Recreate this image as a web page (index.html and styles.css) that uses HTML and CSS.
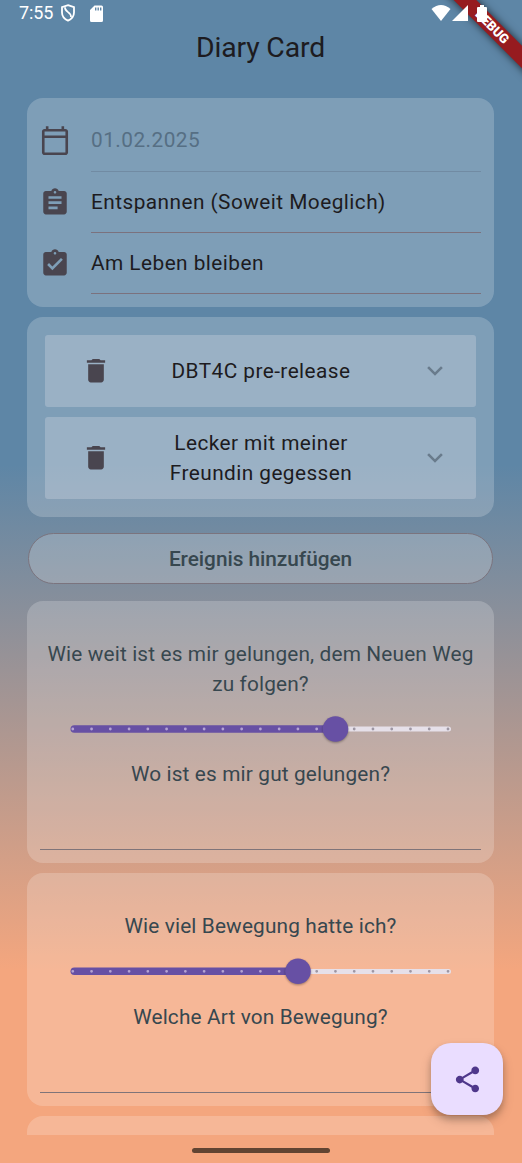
FILE: index.html
```html
<!DOCTYPE html>
<html lang="de">
<head>
<meta charset="utf-8">
<title>Diary Card</title>
<link rel="stylesheet" href="styles.css">
</head>
<body>
<div class="screen">
  <div class="statusbar">
    <span class="clock">7:55</span>
    <svg class="shield" width="16" height="18" viewBox="0 0 16 18"><path d="M8 1.200 14 3.200V8.400C14 12.200 11.400 15 8 16.600 4.600 15 2 12.200 2 8.400V3.200Z" fill="none" stroke="#fff" stroke-width="1.800"/><path d="M5 3.200C4.600 8.600 11.600 7.600 11 13.200" fill="none" stroke="#fff" stroke-width="1.700"/></svg>
    <svg class="sdcard" width="13" height="17" viewBox="0 0 13 17"><path fill="#fff" fill-rule="evenodd" d="M4.500 0.500H11.500Q13 .5 13 2V15.500Q13 17 11.500 17H1.500Q0 17 0 15.500V5ZM5 2.500V5.500H6.400V2.500ZM7.500 2.500V5.500H8.900V2.500ZM10 2.500V5.500H11.400V2.500Z"/></svg>
    <span class="spacer"></span>
    <svg class="wifi" width="20" height="16" viewBox="0 0 20 16"><path fill="#fff" d="M0.500 4Q10-4 19.500 4L10 16Z"/></svg>
    <svg class="signal" width="16" height="16" viewBox="0 0 16 16"><path fill="#fff" d="M16 0V16H0Z"/></svg>
    <svg class="battery" width="10" height="17" viewBox="0 0 10 17"><path fill="#fff" d="M3 0H7V2H9Q10 2 10 3V16Q10 17 9 17H1Q0 17 0 16V3Q0 2 1 2H3Z"/></svg>
  </div>
  <h1 class="title">Diary Card</h1>
  <div class="ribbon-clip"><div class="ribbon">DEBUG</div></div>

  <main class="content">
    <section class="card form">
      <div class="row">
        <svg class="icon" viewBox="0 0 24 24"><path d="M20 3h-1V1h-2v2H7V1H5v2H4c-1.100 0-2 .9-2 2v16c0 1.100.9 2 2 2h16c1.100 0 2-.9 2-2V5c0-1.100-.9-2-2-2zm0 18H4V10h16v11zm0-13H4V5h16v3z"/></svg>
        <div class="field disabled">01.02.2025</div>
      </div>
      <div class="row">
        <svg class="icon" viewBox="0 0 24 24"><path d="M19 3h-4.180C14.400 1.840 13.300 1 12 1c-1.300 0-2.400.84-2.820 2H5c-1.100 0-2 .9-2 2v14c0 1.100.9 2 2 2h14c1.100 0 2-.9 2-2V5c0-1.100-.9-2-2-2zm-7 0c.55 0 1 .45 1 1s-.45 1-1 1-1-.45-1-1 .45-1 1-1zm2 14H7v-2h7v2zm3-4H7v-2h10v2zm0-4H7V7h10v2z"/></svg>
        <div class="field">Entspannen (Soweit Moeglich)</div>
      </div>
      <div class="row">
        <svg class="icon" viewBox="0 0 24 24"><path d="M19 3h-4.180C14.400 1.840 13.300 1 12 1c-1.300 0-2.400.84-2.820 2H5c-1.100 0-2 .9-2 2v14c0 1.100.9 2 2 2h14c1.100 0 2-.9 2-2V5c0-1.100-.9-2-2-2zm-7 0c.55 0 1 .45 1 1s-.45 1-1 1-1-.45-1-1 .45-1 1-1zm-2 14l-4-4 1.410-1.410L10 14.170l6.590-6.590L18 9l-8 8z"/></svg>
        <div class="field">Am Leben bleiben</div>
      </div>
    </section>

    <section class="card events">
      <div class="event">
        <svg class="icon" viewBox="0 0 24 24"><path d="M6 19c0 1.100.9 2 2 2h8c1.100 0 2-.9 2-2V7H6v12zM19 4h-3.500l-1-1h-5l-1 1H5v2h14V4z"/></svg>
        <div class="event-text">DBT4C pre-release</div>
        <svg class="icon chevron" viewBox="0 0 24 24"><path d="M16.590 8.590L12 13.170 7.410 8.590 6 10l6 6 6-6z"/></svg>
      </div>
      <div class="event tall">
        <svg class="icon" viewBox="0 0 24 24"><path d="M6 19c0 1.100.9 2 2 2h8c1.100 0 2-.9 2-2V7H6v12zM19 4h-3.500l-1-1h-5l-1 1H5v2h14V4z"/></svg>
        <div class="event-text">Lecker mit meiner<br>Freundin gegessen</div>
        <svg class="icon chevron" viewBox="0 0 24 24"><path d="M16.590 8.590L12 13.170 7.410 8.590 6 10l6 6 6-6z"/></svg>
      </div>
    </section>

    <button class="add">Ereignis hinzufügen</button>

    <section class="card question first">
      <p>Wie weit ist es mir gelungen, dem Neuen Weg<br>zu folgen?</p>
      <svg class="slider" width="382" height="36" viewBox="0 0 382 36">
        <rect class="inactive" x="250" y="15.600" width="131" height="5" rx="2.500"/>
        <rect class="active" x="0.500" y="14.200" width="266" height="7.600" rx="3.800"/>
        <path class="ticks-on" d="M2.800 18H264"/>
        <path class="ticks-off" d="M284.200 18H379"/>
        <circle class="thumb" cx="265.500" cy="18" r="12.800"/>
      </svg>
      <p>Wo ist es mir gut gelungen?</p>
      <div class="line"></div>
    </section>

    <section class="card question second">
      <p>Wie viel Bewegung hatte ich?</p>
      <svg class="slider" width="382" height="36" viewBox="0 0 382 36">
        <rect class="inactive" x="220" y="15.900" width="161" height="5" rx="2.500"/>
        <rect class="active" x="0.500" y="14.500" width="228" height="7.600" rx="3.800"/>
        <path class="ticks-on" d="M2.800 18.300H227"/>
        <path class="ticks-off" d="M246.700 18.300H379"/>
        <circle class="thumb" cx="228" cy="18.300" r="12.800"/>
      </svg>
      <p>Welche Art von Bewegung?</p>
      <div class="line"></div>
    </section>

    <section class="card next"></section>
  </main>

  <div class="navbar"><div class="handle"></div></div>

  <div class="fab">
    <svg width="31" height="31" viewBox="0 0 24 24"><path d="M18 16.080c-.76 0-1.440.3-1.960.77L8.910 12.700c.05-.23.09-.46.09-.7s-.04-.47-.09-.7l7.050-4.110c.54.5 1.250.81 2.040.81 1.660 0 3-1.340 3-3s-1.340-3-3-3-3 1.340-3 3c0 .24.040.47.090.7L8.040 9.810C7.500 9.310 6.790 9 6 9c-1.660 0-3 1.340-3 3s1.340 3 3 3c.79 0 1.500-.31 2.040-.81l7.120 4.160c-.05.21-.08.43-.08.65 0 1.610 1.310 2.920 2.920 2.920s2.920-1.310 2.920-2.920-1.310-2.920-2.920-2.920z"/></svg>
  </div>
</div>
</body>
</html>
```
FILE: styles.css
```css
* { box-sizing: border-box; }
body {
  margin: 0;
  font-family: Roboto, "Noto Sans", sans-serif;
  color: #1d1b20;
}
.screen {
  position: relative;
  display: flex;
  flex-direction: column;
  width: 522px;
  height: 1163px;
  overflow: hidden;
  background: linear-gradient(180deg, #5e86a6 465px, #f4a67e 970px);
}
.statusbar {
  position: relative;
  z-index: 3;
  display: flex;
  flex: none;
  height: 27px;
  padding: 0 35px 1px 19px;
  align-items: center;
  color: #fff;
}
.clock { width: 41px; font-size: 18px; line-height: 26px; letter-spacing: -0.100px; }
.shield { margin-right: 14px; }
.spacer { flex: 1; }
.signal { margin: 0 9px 0 1px; }
.title {
  flex: none;
  height: 71px;
  margin: 0;
  font-size: 28.400px;
  font-weight: 400;
  line-height: 41px;
  letter-spacing: -0.150px;
  padding-right: 1px;
  text-align: center;
}
.ribbon-clip {
  position: absolute;
  z-index: 2;
  top: 0;
  right: 0;
  width: 100px;
  height: 100px;
  overflow: hidden;
}
.ribbon {
  position: absolute;
  top: 19px;
  right: -50px;
  width: 160px;
  height: 16px;
  transform: rotate(45deg);
  background: #961b1f;
  box-shadow: 0 0 8px rgba(0, 0, 0, 0.7);
  color: #fff;
  font-size: 13px;
  font-weight: 900;
  line-height: 16px;
  text-align: center;
}
.content {
  display: flex;
  flex: none;
  flex-direction: column;
  height: 1037px;
  padding: 0 28px 0 27px;
  overflow: hidden;
}
.card {
  flex: none;
  border-radius: 16px;
  background: rgba(255, 255, 255, 0.2);
}
.form { height: 209px; padding: 12.400px 13px 0 12px; }
.row { display: flex; height: 61.300px; align-items: center; gap: 20px; }
.icon { width: 32px; height: 31.300px; flex: none; fill: #49454f; }
.field {
  flex: 1;
  height: 61.300px;
  border-bottom: 1px solid #7b727e;
  font-size: 20.800px;
  line-height: 61.300px;
  letter-spacing: 0.460px;
  white-space: nowrap;
}
.disabled { color: #566f84; border-color: #718ba3; }
.events {
  display: flex;
  flex-direction: column;
  gap: 10px;
  height: 200px;
  margin-top: 10px;
  padding: 18px;
}
.event {
  display: flex;
  height: 72px;
  padding: 0 25px 0 35px;
  align-items: center;
  border-radius: 3px;
  background: rgba(255, 245, 250, 0.22);
}
.event.tall { height: 82px; }
.event-text {
  flex: 1;
  font-size: 20.800px;
  line-height: 30.500px;
  letter-spacing: 0.440px;
  text-align: center;
}
.chevron { margin-left: 9px; fill: #697b8c; }
.add {
  flex: none;
  height: 51px;
  margin: 16px 1px 17px;
  padding: 1px 0 0;
  border: 1px solid #7b747e;
  border-radius: 26px;
  background: rgba(255, 255, 255, 0.2);
  color: #37474f;
  font: 500 20.800px/48px Roboto, sans-serif;
  letter-spacing: -0.030px;
}
.question {
  display: flex;
  flex-direction: column;
  align-items: center;
  padding: 38px 13px 0;
}
.question p {
  margin: 0;
  color: #37474f;
  font-size: 20.800px;
  line-height: 30px;
  letter-spacing: 0.150px;
  text-align: center;
  white-space: nowrap;
}
.first { height: 262px; }
.second { height: 233px; margin-top: 10px; }
.slider { flex: none; margin: 12px 0; overflow: visible; }
.second .slider { margin-bottom: 13px; }
.inactive { fill: #e6e0e9; }
.active { fill: #6750a4; }
.ticks-on, .ticks-off {
  fill: none;
  stroke-width: 2.800;
  stroke-linecap: round;
  stroke-dasharray: 0 18.760;
}
.ticks-on { stroke: #b5a4d3; }
.ticks-off { stroke: #9d96a3; }
.thumb { fill: #6750a4; filter: drop-shadow(0 1px 1px rgba(0, 0, 0, 0.35)); }
.line { width: 441px; height: 1px; margin-top: 60px; background: #7f7479; }
.next { height: 40px; margin-top: 10px; }
.navbar { display: flex; height: 28px; padding-right: 1px; justify-content: center; align-items: center; }
.handle { width: 138px; height: 5px; margin-top: 3px; border-radius: 3px; background: #614432; }
.fab {
  position: absolute;
  left: 431px;
  top: 1043px;
  display: flex;
  width: 72px;
  height: 72px;
  align-items: center;
  justify-content: center;
  border-radius: 20px;
  background: #eaddff;
  box-shadow: 0 4px 6px rgba(0, 0, 0, 0.2), 0 6px 12px rgba(0, 0, 0, 0.15);
}
.fab svg { fill: #4f378b; }
```
